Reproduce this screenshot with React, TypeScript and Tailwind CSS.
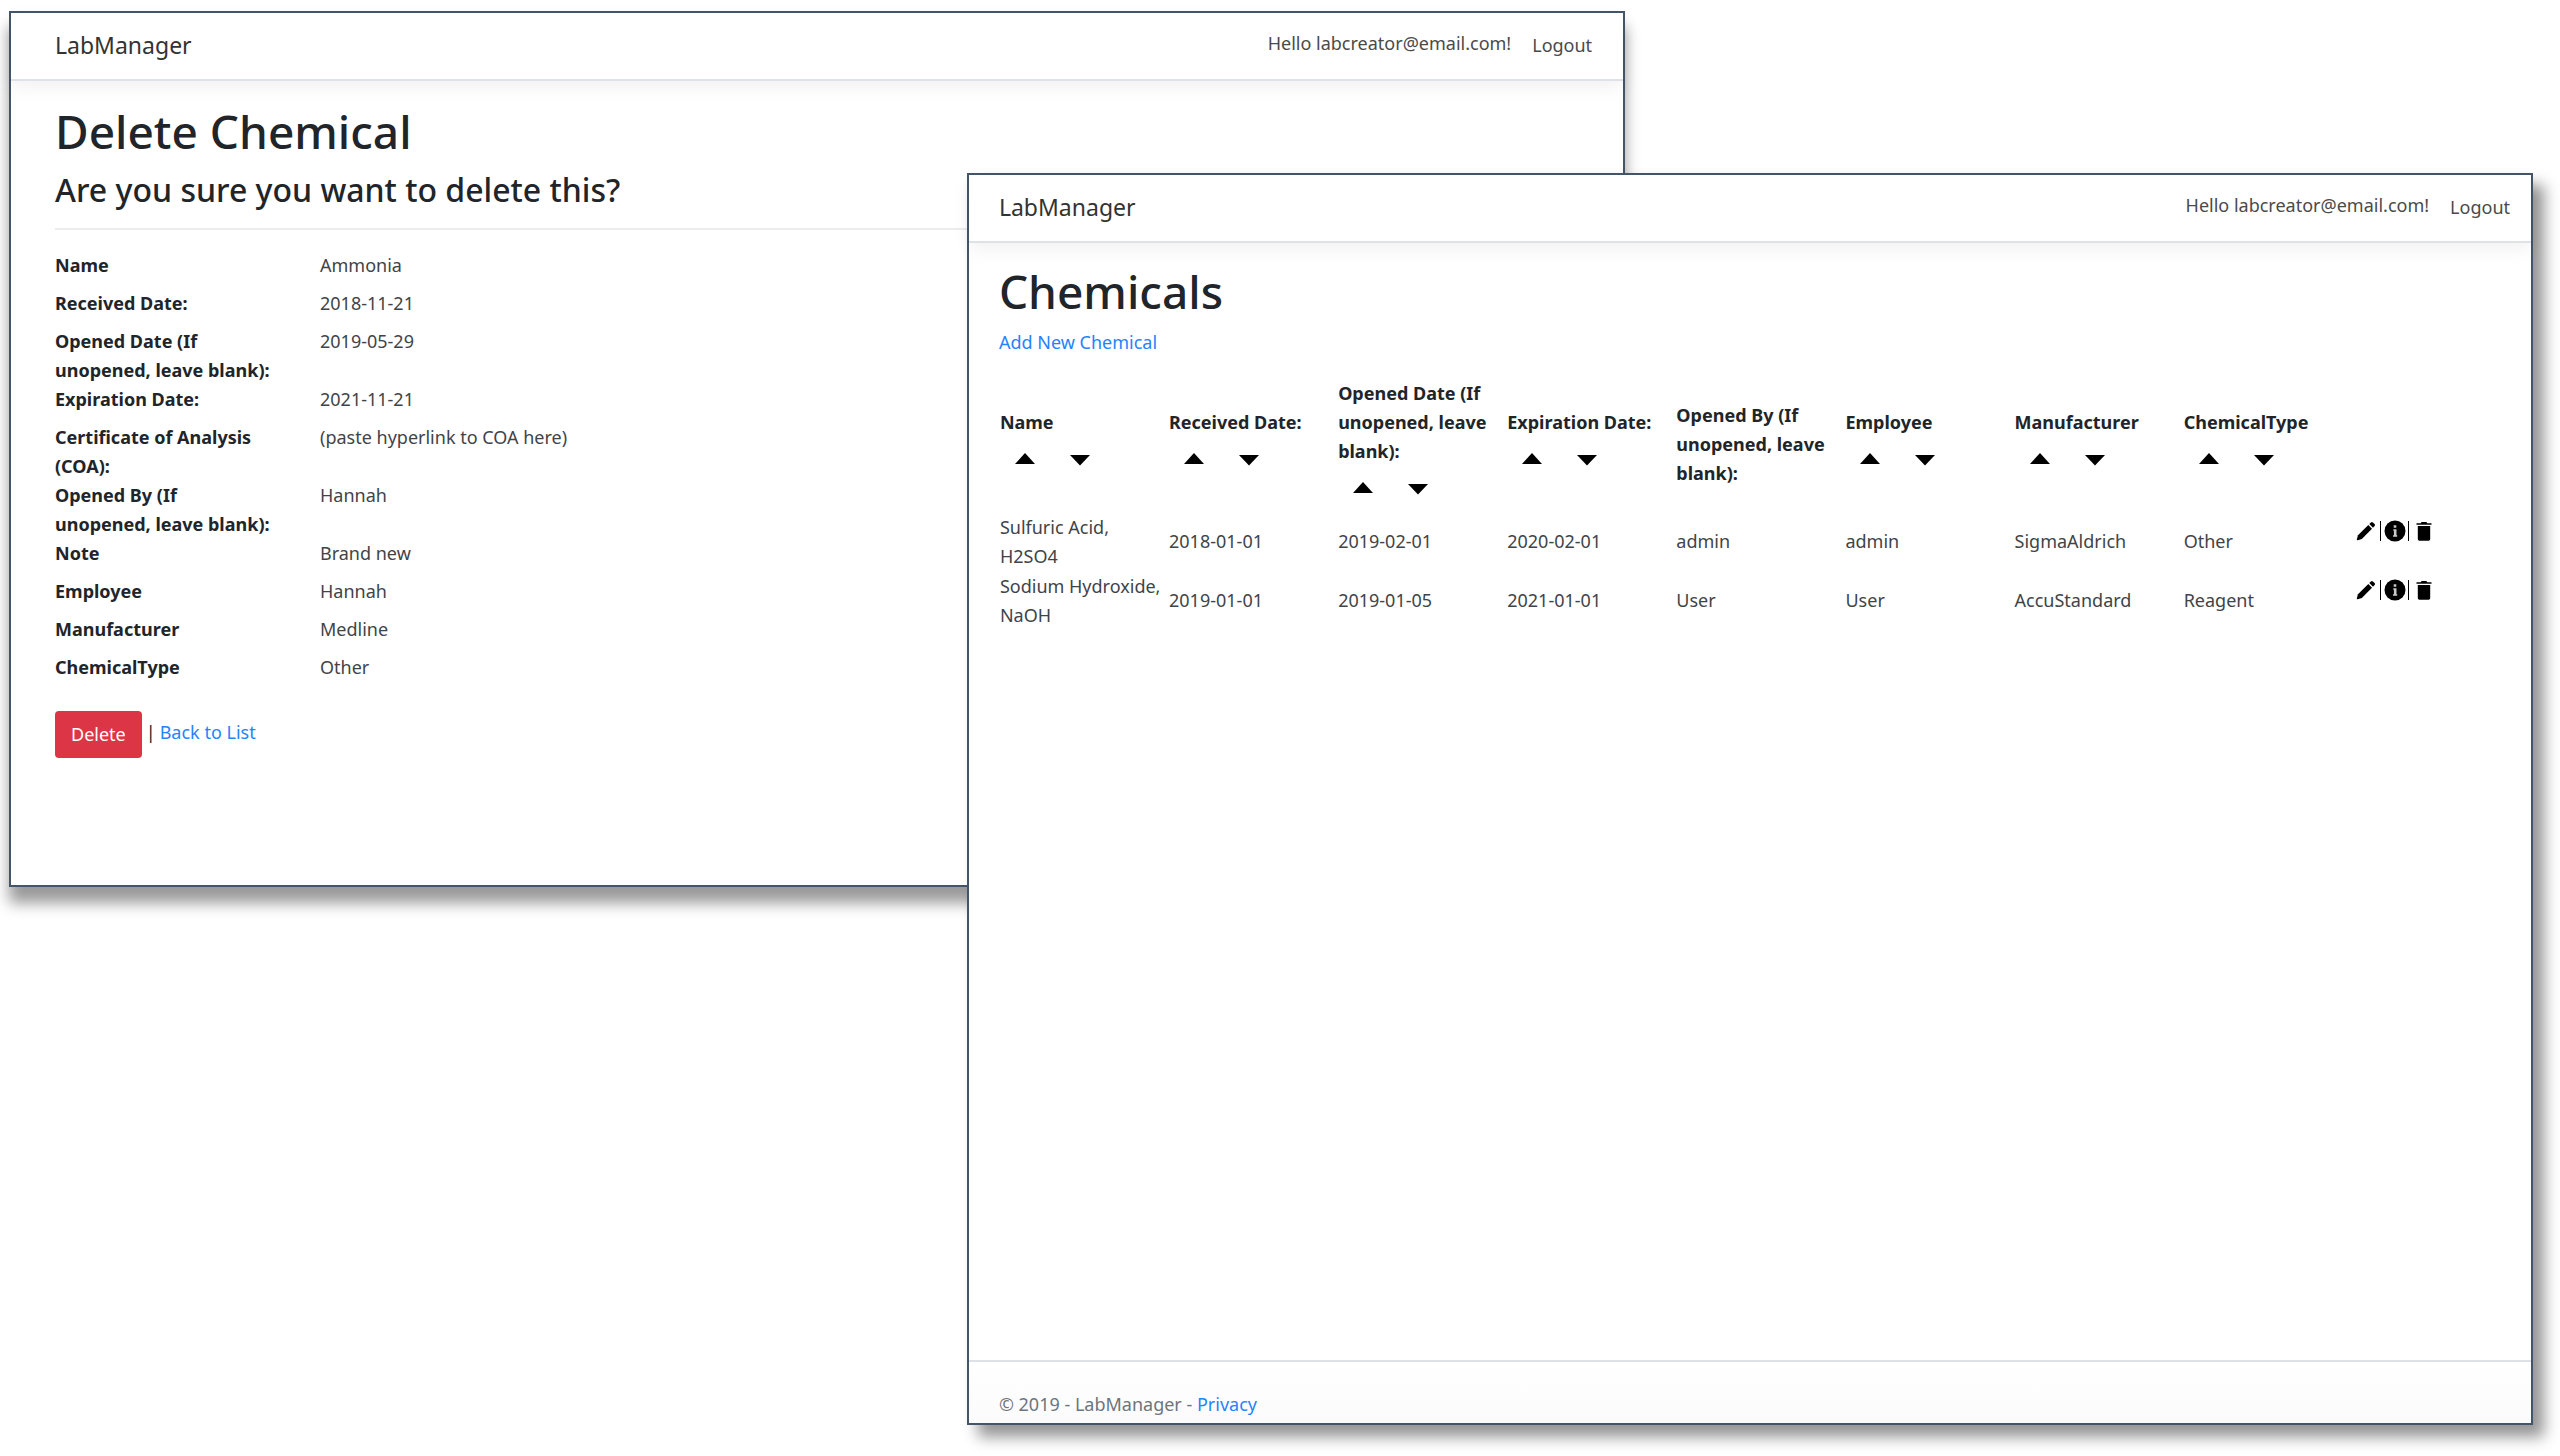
import type { ReactNode } from "react";

const details: [string, string][] = [
  ["Name", "Ammonia"],
  ["Received Date:", "2018-11-21"],
  ["Opened Date (If unopened, leave blank):", "2019-05-29"],
  ["Expiration Date:", "2021-11-21"],
  ["Certificate of Analysis (COA):", "(paste hyperlink to COA here)"],
  ["Opened By (If unopened, leave blank):", "Hannah"],
  ["Note", "Brand new"],
  ["Employee", "Hannah"],
  ["Manufacturer", "Medline"],
  ["ChemicalType", "Other"],
];

const columns = [
  { label: "Name", sortable: true },
  { label: "Received Date:", sortable: true },
  { label: "Opened Date (If unopened, leave blank):", sortable: true },
  { label: "Expiration Date:", sortable: true },
  { label: "Opened By (If unopened, leave blank):", sortable: false },
  { label: "Employee", sortable: true },
  { label: "Manufacturer", sortable: true },
  { label: "ChemicalType", sortable: true },
];

const chemicals = [
  ["Sulfuric Acid, H2SO4", "2018-01-01", "2019-02-01", "2020-02-01", "admin", "admin", "SigmaAldrich", "Other"],
  ["Sodium Hydroxide, NaOH", "2019-01-01", "2019-01-05", "2021-01-01", "User", "User", "AccuStandard", "Reagent"],
];

function PencilIcon() {
  return (
    <svg viewBox="0 0 20 20" className="size-5" aria-hidden="true">
      <path d="M12.3 4 16 7.700 5.800 18 1.800 19.300Q.7 19.500.8 18.300L2 14.300Z" />
      <path d="m13.300 3 1.600-1.600q1-1 2 0l1.700 1.700q1 1 0 2L17 6.700Z" />
    </svg>
  );
}

function InfoIcon() {
  return (
    <svg viewBox="0 0 22 22" className="size-[22px]" aria-hidden="true">
      <circle cx="11" cy="11" r="10.500" />
      <path d="M9.700 5.300h2.600v2.500H9.700zM9.300 9.300h3.200v5.900h.7v1.500H9v-1.500h.9v-4.400h-.6z" fill="#c9c9c9" />
    </svg>
  );
}

function TrashIcon() {
  return (
    <svg viewBox="0 0 16 20" className="h-5 w-4" aria-hidden="true">
      <path d="M.5 2.200h4.300L5.500 1h5l.7 1.200h4.300v1.600H.5z" />
      <path d="M1.800 4.900h12.400v13.200q0 1.600-1.600 1.600H3.400q-1.600 0-1.600-1.600z" />
    </svg>
  );
}

function SortButtons({ label }: { label: string }) {
  return (
    <div className="mt-3 flex h-8 gap-[35px] pl-[15px]">
      <button type="button" aria-label={`Sort ${label} ascending`} className="h-5 w-5">
        <svg viewBox="0 0 20 20" className="size-5" aria-hidden="true">
          <path d="M10 4 20 15H0z" />
        </svg>
      </button>
      <button type="button" aria-label={`Sort ${label} descending`} className="h-5 w-5">
        <svg viewBox="0 0 20 20" className="size-5" aria-hidden="true">
          <path d="M0 6h20L10 16.500z" />
        </svg>
      </button>
    </div>
  );
}

function Header({ className }: { className: string }) {
  return (
    <header
      className={`flex h-[68px] shrink-0 items-center justify-between border-b-2 border-[#dee2e6] bg-white pb-0.5 shadow-[0_6px_18px_rgba(0,0,0,0.06)] ${className}`}
    >
      <a href="#home" className="text-[23px] leading-9 text-[#333333]">
        LabManager
      </a>
      <nav className="flex text-lg leading-7 text-[#4a4a4a]">
        <span className="-mt-0.5">Hello labcreator@email.com!</span>
        <button type="button" className="ml-[21px]">
          Logout
        </button>
      </nav>
    </header>
  );
}

function Window({ className, children }: { className: string; children: ReactNode }) {
  return (
    <section className={`absolute flex flex-col border-2 border-[#44546a] bg-white ${className}`}>{children}</section>
  );
}

export default function App() {
  return (
    <div className="relative min-h-screen overflow-hidden bg-white font-['Noto_Sans','Open_Sans',sans-serif] text-lg leading-[29px] text-[#212529]">
      <Window className="top-[11px] left-[9px] min-h-[876px] w-[63.13%] shadow-[0_16px_14px_rgba(0,0,0,0.4)]">
        <Header className="pr-[31px] pl-[44px]" />
        <main className="pt-[22px] pl-[44px]">
          <h1 className="text-[46px] leading-[56px] font-medium">Delete Chemical</h1>
          <h2 className="mt-[11px] text-[32px] leading-10 font-medium">Are you sure you want to delete this?</h2>
          <hr className="mt-[18px] border-t-2 border-[#ececec]" />
          <dl className="mt-[21px] grid grid-cols-[265px_1fr]">
            {details.map(([term, value]) => (
              <div key={term} className="contents">
                <dt className="pr-[46px] font-bold">{term}</dt>
                <dd className="mb-[9px] text-[#3f4448]">{value}</dd>
              </div>
            ))}
          </dl>
          <form className="mt-5 flex items-start">
            <button type="button" className="h-[47px] rounded bg-[#dc3545] px-4 text-white">
              Delete
            </button>
            <div className="mt-[7px] ml-1 flex gap-1">
              <span>|</span>
              <a href="#list" className="text-[#2483ff]">
                Back to List
              </a>
            </div>
          </form>
        </main>
      </Window>

      <Window className="top-[173px] right-[27px] bottom-[31px] left-[37.77%] shadow-[11px_12px_14px_rgba(0,0,0,0.42)]">
        <Header className="pr-[21px] pl-[30px]" />
        <main className="flex-1 pt-5 pr-[10px] pl-[30px]">
          <h1 className="text-[46px] leading-[56px] font-medium">Chemicals</h1>
          <p className="mt-[9px]">
            <a href="#create" className="text-[#2483ff]">
              Add New Chemical
            </a>
          </p>
          <table className="mt-[19px] w-full table-fixed text-left">
            <thead>
              <tr>
                {columns.map(({ label, sortable }) => (
                  <th key={label} scope="col" className="h-[136px] p-px font-bold">
                    <div className="pr-1">{label}</div>
                    {sortable && <SortButtons label={label} />}
                  </th>
                ))}
                <th className="p-px" aria-label="Actions" />
              </tr>
            </thead>
            <tbody className="text-[#3f4448]">
              {chemicals.map((row) => (
                <tr key={row[0]}>
                  {row.map((cell, i) => (
                    <td key={i} className="h-[59px] px-px">
                      {cell}
                    </td>
                  ))}
                  <td className="px-px align-top">
                    <div className="flex items-center pt-2 pl-[3px] text-black">
                      <a href="#edit" aria-label="Edit">
                        <PencilIcon />
                      </a>
                      <span className="ml-1 h-5 w-px bg-black" />
                      <a href="#details" aria-label="Details" className="ml-[3px]">
                        <InfoIcon />
                      </a>
                      <span className="ml-0.5 h-5 w-px bg-black" />
                      <a href="#delete" aria-label="Delete" className="ml-[7px]">
                        <TrashIcon />
                      </a>
                    </div>
                  </td>
                </tr>
              ))}
            </tbody>
          </table>
        </main>
        <footer className="border-t-2 border-[#dee2e6] bg-gradient-to-b from-white to-[#fbfbfb] pt-7 pb-1 pl-[30px] text-[#6c757d]">
          © 2019 - LabManager -{" "}
          <a href="#privacy" className="text-[#2483ff]">
            Privacy
          </a>
        </footer>
      </Window>
    </div>
  );
}
